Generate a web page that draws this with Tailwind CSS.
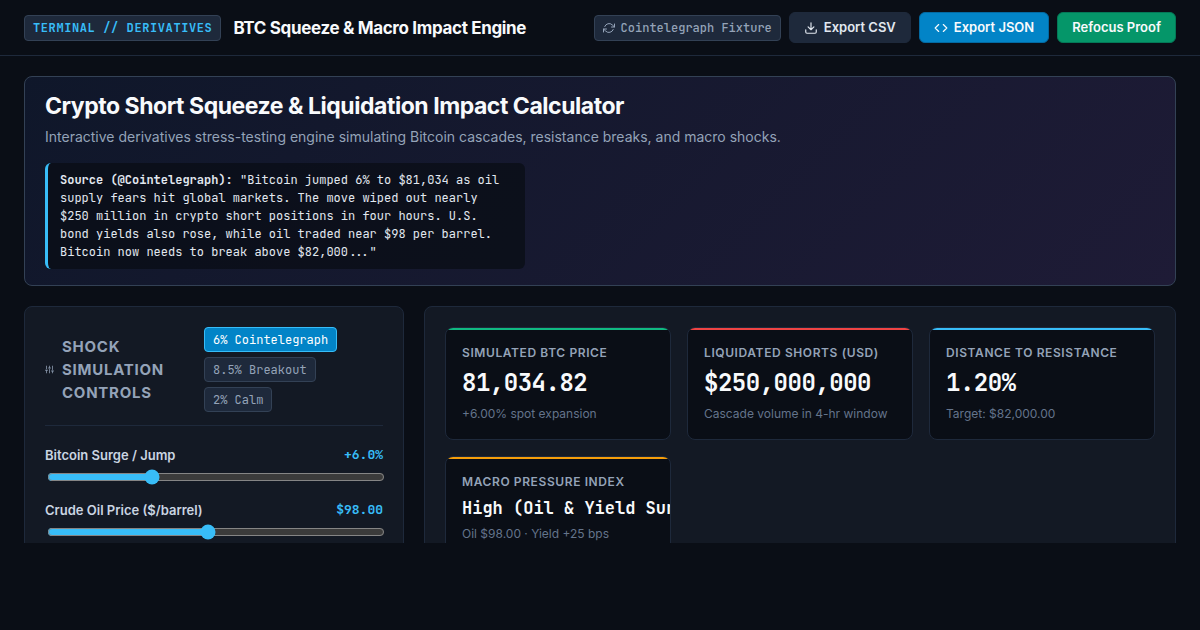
<!DOCTYPE html>
<html lang="en">
<head>
    <meta charset="UTF-8">
    <meta name="viewport" content="width=device-width, initial-scale=1.0">
    <title>BTC Squeeze &amp; Macro Impact Engine</title>
    <script src="https://cdn.jsdelivr.net/npm/@tailwindcss/browser@4"></script>
</head>
<body class="min-h-screen bg-[#0a0e16] text-slate-50 font-['Inter','Liberation_Sans',sans-serif] scheme-dark">
    <div class="h-[calc(100vh-87px)] overflow-hidden">
        <header class="flex items-center justify-between border-b border-[#1e293b] px-6 py-3">
            <div class="flex items-center gap-3">
                <span class="rounded border border-[#334155] bg-[#1e293b] px-2 text-xs leading-6 font-bold tracking-wider text-[#38bdf8] font-['JetBrains_Mono','Liberation_Mono',monospace]">TERMINAL // DERIVATIVES</span>
                <span class="text-[17px] leading-6 font-bold tracking-[-0.02em]">BTC Squeeze &amp; Macro Impact Engine</span>
            </div>
            <div class="flex items-center gap-2">
                <span class="flex items-center gap-1.5 rounded border border-[#334155] bg-[#1e293b] px-2 text-xs leading-6 font-medium text-[#94a3b8] font-['JetBrains_Mono','Liberation_Mono',monospace]">
                    <svg class="size-3" viewBox="0 0 24 24" fill="none" stroke="currentColor" stroke-width="2" stroke-linecap="round" stroke-linejoin="round"><path d="M23 4v6h-6M1 20v-6h6"/><path d="M3.51 9a9 9 0 0 1 14.85-3.36L23 10M1 14l4.64 4.36A9 9 0 0 0 20.49 15"/></svg>
                    Cointelegraph Fixture
                </span>
                <button type="button" class="flex h-[31px] items-center gap-1.5 rounded-md border border-[#1e293b] bg-[#1e293b] px-3.5 text-[13px] font-semibold text-slate-200">
                    <svg class="size-3.5" viewBox="0 0 24 24" fill="none" stroke="currentColor" stroke-width="2" stroke-linecap="round" stroke-linejoin="round"><path d="M21 15v4a2 2 0 0 1-2 2H5a2 2 0 0 1-2-2v-4M7 10l5 5 5-5M12 15V3"/></svg>
                    Export CSV
                </button>
                <button type="button" class="flex h-[31px] items-center gap-1.5 rounded-md border border-[#0369a1] bg-[#0284c7] px-3.5 text-[13px] font-semibold">
                    <svg class="size-3.5" viewBox="0 0 24 24" fill="none" stroke="currentColor" stroke-width="2" stroke-linecap="round" stroke-linejoin="round"><path d="M16 18l6-6-6-6M8 6l-6 6 6 6"/></svg>
                    Export JSON
                </button>
                <button type="button" class="h-[31px] rounded-md border border-[#047857] bg-[#059669] px-3.5 text-[13px] font-semibold">Refocus Proof</button>
            </div>
        </header>

        <main class="flex flex-col gap-5 px-6 pt-5">
            <section class="rounded-lg border border-[#334155] bg-linear-135 from-[#0f172a] to-[#1e1b36] px-5 pt-[13px] pb-4">
                <h1 class="text-[23px] leading-8 font-bold tracking-[-0.02em]">Crypto Short Squeeze &amp; Liquidation Impact Calculator</h1>
                <p class="mt-[3px] text-sm leading-6 text-[#94a3b8]">Interactive derivatives stress-testing engine simulating Bitcoin cascades, resistance breaks, and macro shocks.</p>
                <blockquote class="mt-3.5 max-w-[480px] rounded-md border-l-3 border-[#38bdf8] bg-[#0a0e16]/80 px-3 py-2 text-xs leading-[18px] text-slate-200 font-['JetBrains_Mono','Liberation_Mono',monospace]">
                    <strong>Source (@Cointelegraph):</strong> "Bitcoin jumped 6% to $81,034 as oil supply fears hit global markets. The move wiped out nearly $250 million in crypto short positions in four hours. U.S. bond yields also rose, while oil traded near $98 per barrel. Bitcoin now needs to break above $82,000..."
                </blockquote>
            </section>

            <div class="grid grid-cols-[380px_1fr] gap-5">
                <!-- Controls -->
                <section class="h-[480px] rounded-lg border border-[#1e293b] bg-[#131924] p-5">
                    <div class="flex items-center justify-between border-b border-[#1e293b] pb-[13px]">
                        <h2 class="flex items-center gap-2 text-[15px] font-bold leading-[23px] tracking-wider text-[#94a3b8] uppercase">
                            <svg class="size-[9px] shrink-0" viewBox="0 0 24 24" fill="none" stroke="currentColor" stroke-width="2" stroke-linecap="round" stroke-linejoin="round"><path d="M4 21v-7M4 10V3M12 21v-9M12 8V3M20 21v-5M20 12V3M1 14h6M9 8h6M17 16h6"/></svg>
                            <span class="w-[108px]">Shock Simulation Controls</span>
                        </h2>
                        <div class="flex w-[179px] flex-col items-start gap-[5px] text-xs text-[#94a3b8] font-['JetBrains_Mono','Liberation_Mono',monospace]">
                            <button type="button" class="h-[25px] rounded border border-[#38bdf8] bg-[#0284c7] px-2 text-white">6% Cointelegraph</button>
                            <button type="button" class="h-[25px] rounded border border-[#334155] bg-[#1e293b] px-2">8.5% Breakout</button>
                            <button type="button" class="h-[25px] rounded border border-[#334155] bg-[#1e293b] px-2">2% Calm</button>
                        </div>
                    </div>
                    <div class="mt-[19px] flex flex-col gap-[15px] text-[13px] leading-5">
                        <div>
                            <div class="flex justify-between">
                                <label for="surge" class="font-semibold text-slate-300">Bitcoin Surge / Jump</label>
                                <output for="surge" class="font-bold text-[#38bdf8] font-['JetBrains_Mono','Liberation_Mono',monospace]">+6.0%</output>
                            </div>
                            <input id="surge" type="range" min="0" max="20" step="0.5" value="6" class="mx-0.5 mt-1 block h-4 w-full accent-[#38bdf8]">
                        </div>
                        <div>
                            <div class="flex justify-between">
                                <label for="oil" class="font-semibold text-slate-300">Crude Oil Price ($/barrel)</label>
                                <output for="oil" class="font-bold text-[#38bdf8] font-['JetBrains_Mono','Liberation_Mono',monospace]">$98.00</output>
                            </div>
                            <input id="oil" type="range" min="60" max="140" step="0.5" value="98" class="mx-0.5 mt-1 block h-4 w-full accent-[#38bdf8]">
                        </div>
                    </div>
                </section>

                <!-- Metrics -->
                <section class="rounded-lg border border-[#1e293b] bg-[#131924] p-5">
                    <div class="grid grid-cols-3 gap-4">
                        <article class="h-[113px] overflow-hidden rounded-lg border border-[#1e293b] bg-[#0a0e16]">
                            <div class="h-0.5 bg-[#10b981]"></div>
                            <div class="px-4 pt-[13px] whitespace-nowrap">
                                <h3 class="text-xs leading-5 font-semibold tracking-wider text-[#94a3b8]">SIMULATED BTC PRICE</h3>
                                <p class="mt-1 text-2xl leading-8 font-bold tracking-[-0.02em] font-['JetBrains_Mono','Liberation_Mono',monospace]">81,034.82</p>
                                <p class="mt-[5px] text-xs leading-5 text-[#64748b]">+6.00% spot expansion</p>
                            </div>
                        </article>
                        <article class="h-[113px] overflow-hidden rounded-lg border border-[#1e293b] bg-[#0a0e16]">
                            <div class="h-0.5 bg-[#ef4444]"></div>
                            <div class="px-4 pt-[13px] whitespace-nowrap">
                                <h3 class="text-xs leading-5 font-semibold tracking-wider text-[#94a3b8]">LIQUIDATED SHORTS (USD)</h3>
                                <p class="mt-1 text-2xl leading-8 font-bold tracking-[-0.02em] font-['JetBrains_Mono','Liberation_Mono',monospace]">$250,000,000</p>
                                <p class="mt-[5px] text-xs leading-5 text-[#64748b]">Cascade volume in 4-hr window</p>
                            </div>
                        </article>
                        <article class="h-[113px] overflow-hidden rounded-lg border border-[#1e293b] bg-[#0a0e16]">
                            <div class="h-0.5 bg-[#38bdf8]"></div>
                            <div class="px-4 pt-[13px] whitespace-nowrap">
                                <h3 class="text-xs leading-5 font-semibold tracking-wider text-[#94a3b8]">DISTANCE TO RESISTANCE</h3>
                                <p class="mt-1 text-2xl leading-8 font-bold tracking-[-0.02em] font-['JetBrains_Mono','Liberation_Mono',monospace]">1.20%</p>
                                <p class="mt-[5px] text-xs leading-5 text-[#64748b]">Target: $82,000.00</p>
                            </div>
                        </article>
                        <article class="h-[113px] overflow-hidden rounded-lg border border-[#1e293b] bg-[#0a0e16]">
                            <div class="h-0.5 bg-[#f59e0b]"></div>
                            <div class="px-4 pt-[13px] whitespace-nowrap">
                                <h3 class="text-xs leading-5 font-semibold tracking-wider text-[#94a3b8]">MACRO PRESSURE INDEX</h3>
                                <p class="mt-1 text-[17px] leading-6 font-bold font-['JetBrains_Mono','Liberation_Mono',monospace]">High (Oil &amp; Yield Surge)</p>
                                <p class="mt-1 text-xs leading-5 text-[#64748b]">Oil $98.00 · Yield +25 bps</p>
                            </div>
                        </article>
                    </div>
                </section>
            </div>
        </main>
    </div>
</body>
</html>
